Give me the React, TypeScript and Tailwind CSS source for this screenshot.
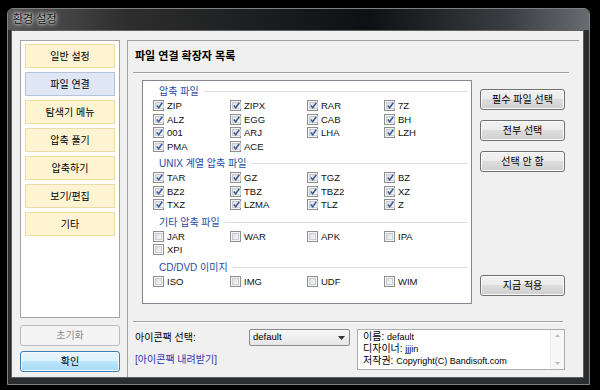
import React from "react";

const groups = [
  {
    title: "압축 파일",
    on: true,
    items: ["ZIP", "ZIPX", "RAR", "7Z", "ALZ", "EGG", "CAB", "BH", "001", "ARJ", "LHA", "LZH", "PMA", "ACE"],
  },
  {
    title: "UNIX 계열 압축 파일",
    on: true,
    items: ["TAR", "GZ", "TGZ", "BZ", "BZ2", "TBZ", "TBZ2", "XZ", "TXZ", "LZMA", "TLZ", "Z"],
  },
  { title: "기타 압축 파일", on: false, items: ["JAR", "WAR", "APK", "IPA", "XPI"] },
  { title: "CD/DVD 이미지", on: false, items: ["ISO", "IMG", "UDF", "WIM"] },
];

const menu = ["일반 설정", "파일 연결", "탐색기 메뉴", "압축 풀기", "압축하기", "보기/편집", "기타"];

function Check({ on }: { on: boolean }) {
  return (
    <span className="w-[11px] h-[11px] border border-[#8e8f8f] bg-[#f4f4f4] p-[1px] flex shrink-0">
      <span className="flex-1 border border-[#c9cdd3] bg-gradient-to-br from-[#dadee4] to-[#f8f8f8] flex items-center justify-center">
        {on && (
          <svg width="7" height="7" viewBox="0 0 7 7">
            <path d="M0.8 3.6 L2.7 5.8 L6.3 0.8" fill="none" stroke="#3d5a94" strokeWidth="1.5" />
          </svg>
        )}
      </span>
    </span>
  );
}

function WinButton({ children }: { children: React.ReactNode }) {
  return (
    <div className="h-[21px] rounded-[3px] border border-[#707070] bg-[linear-gradient(#f2f2f2_0%,#ebebeb_50%,#dddddd_50%,#cfcfcf_100%)] shadow-[inset_0_0_0_1px_#fbfbfb] flex items-center justify-center text-[10px] text-black">
      {children}
    </div>
  );
}

export default function App() {
  return (
    <div className="w-[600px] h-[390px] bg-black overflow-hidden font-['Liberation_Sans','Noto_Sans_CJK_KR',sans-serif] text-black">
      <div className="ml-[7px] mt-[8px] w-[583px] h-[377px] rounded-t-[6px] border border-[#808080] bg-[#2c2d2f] flex flex-col">
        {/* title bar */}
        <div className="h-[21px] rounded-t-[5px] bg-[linear-gradient(90deg,#595959_0%,#2e2e2e_20%,#0e1013_62%,#3a3d41_86%,#686c70_100%)] flex items-center pl-[5px]">
          <span className="text-[11px] text-[#111] [text-shadow:0_0_5px_#fff,0_0_3px_#fff]">환경 설정</span>
        </div>

        <div className="ml-[3px] mr-[5px] mb-[6px] flex-1 border border-[#5f5f5f] bg-[#f0f0f0] flex pl-[8px] pr-[4px] pt-[9px]">
          {/* left menu */}
          <div className="w-[100px] flex flex-col pb-[5px]">
            <div className="flex-1 border border-[#a5a5a5] bg-white pt-[3px] flex flex-col items-center gap-[4px]">
              {menu.map((m, i) => (
                <div
                  key={m}
                  className={
                    i === 1
                      ? "w-[90px] h-[24px] border border-[#b4c3dc] bg-[#dfe7f5] flex items-center justify-center text-[10px]"
                      : "w-[90px] h-[24px] border border-[#ecdca6] bg-[#fff4d2] flex items-center justify-center text-[10px]"
                  }
                >
                  {m}
                </div>
              ))}
            </div>
            <div className="mt-[7px] h-[21px] rounded-[3px] border border-[#b9bcbf] bg-[#f4f4f4] flex items-center justify-center text-[10px] text-[#8d8d8d]">
              초기화
            </div>
            <div className="mt-[5px] h-[21px] rounded-[3px] border border-[#3c7fb1] bg-[linear-gradient(#eaf6fd_0%,#d9f0fc_50%,#bee6fd_50%,#a7d9f5_100%)] shadow-[inset_0_0_0_1px_#f4fbff] flex items-center justify-center text-[10px]">
              확인
            </div>
          </div>

          {/* right panel */}
          <div className="ml-[7px] flex-1 border-t border-l border-[#a0a0a0] flex flex-col">
            <div className="pl-[7px] pt-[7px] h-[23px] text-[11px] font-bold leading-[16px]">파일 연결 확장자 목록</div>
            <div className="mt-[8px] ml-[5px] mr-[10px] h-[2px] border-t border-[#a0a0a0] border-b border-b-white" />

            <div className="mt-[6px] ml-[14px] flex gap-[8px]">
              <div className="w-[330px] h-[224px] border border-[#828790] bg-white pt-[3px] flex flex-col">
                {groups.map((g, gi) => (
                  <div key={g.title} className={gi === 0 ? "" : "mt-[3px]"}>
                    <div className="h-[15px] pl-[16px] pr-[4px] flex items-center gap-[5px]">
                      <span className="text-[10px] text-[#2a4aa6] whitespace-nowrap">{g.title}</span>
                      <span className="flex-1 h-px bg-[#dcdcdc]" />
                    </div>
                    <div className="pl-[10px] grid grid-cols-[77px_77px_77px_77px]">
                      {g.items.map((it) => (
                        <div key={it} className="h-[13.5px] flex items-center gap-[3px]">
                          <Check on={g.on} />
                          <span className="text-[9.5px] leading-none text-[#111]">{it}</span>
                        </div>
                      ))}
                    </div>
                  </div>
                ))}
              </div>

              <div className="w-[85px] flex flex-col pt-[9px] pb-[8px]">
                <WinButton>필수 파일 선택</WinButton>
                <div className="mt-[10px]">
                  <WinButton>전부 선택</WinButton>
                </div>
                <div className="mt-[10px]">
                  <WinButton>선택 안 함</WinButton>
                </div>
                <div className="mt-auto">
                  <WinButton>지금 적용</WinButton>
                </div>
              </div>
            </div>

            <div className="mt-[17px] ml-[5px] mr-[16px] h-[2px] border-t border-[#a0a0a0] border-b border-b-white" />

            <div className="mt-[6px] pl-[7px] flex">
              <div className="w-[222px] flex flex-col">
                <div className="flex items-center h-[17px]">
                  <span className="w-[114px] text-[10px]">아이콘팩 선택:</span>
                  <div className="w-[101px] h-[17px] rounded-[2px] border border-[#8a8a8a] bg-[linear-gradient(#f7f7f7,#e6e6e6)] flex items-center pl-[3px] pr-[4px]">
                    <span className="flex-1 text-[9.5px]">default</span>
                    <svg width="7" height="4" viewBox="0 0 7 4">
                      <path d="M0 0 H7 L3.5 4 Z" fill="#333" />
                    </svg>
                  </div>
                </div>
                <div className="mt-[6px] text-[10px] text-[#3434b0]">[아이콘팩 내려받기]</div>
              </div>
              <div className="w-[208px] h-[41px] border border-[#abadb3] bg-white flex">
                <div className="flex-1 pl-[5px] pt-[1px] text-[10px] leading-[11px] flex flex-col">
                  <span>
                    이름: <span className="text-[9px]">default</span>
                  </span>
                  <span>
                    디자이너: <span className="text-[9px]">jjjin</span>
                  </span>
                  <span>
                    저작권: <span className="text-[9px]">Copyright(C) Bandisoft.com</span>
                  </span>
                </div>
                <div className="w-[14px] bg-[#f7f7f7] border-l border-[#ececec] flex flex-col items-center justify-between py-[4px]">
                  <svg width="5" height="3" viewBox="0 0 5 3">
                    <path d="M0 3 H5 L2.5 0 Z" fill="#bdbdbd" />
                  </svg>
                  <svg width="5" height="3" viewBox="0 0 5 3">
                    <path d="M0 0 H5 L2.5 3 Z" fill="#bdbdbd" />
                  </svg>
                </div>
              </div>
            </div>
          </div>
        </div>
      </div>
    </div>
  );
}
